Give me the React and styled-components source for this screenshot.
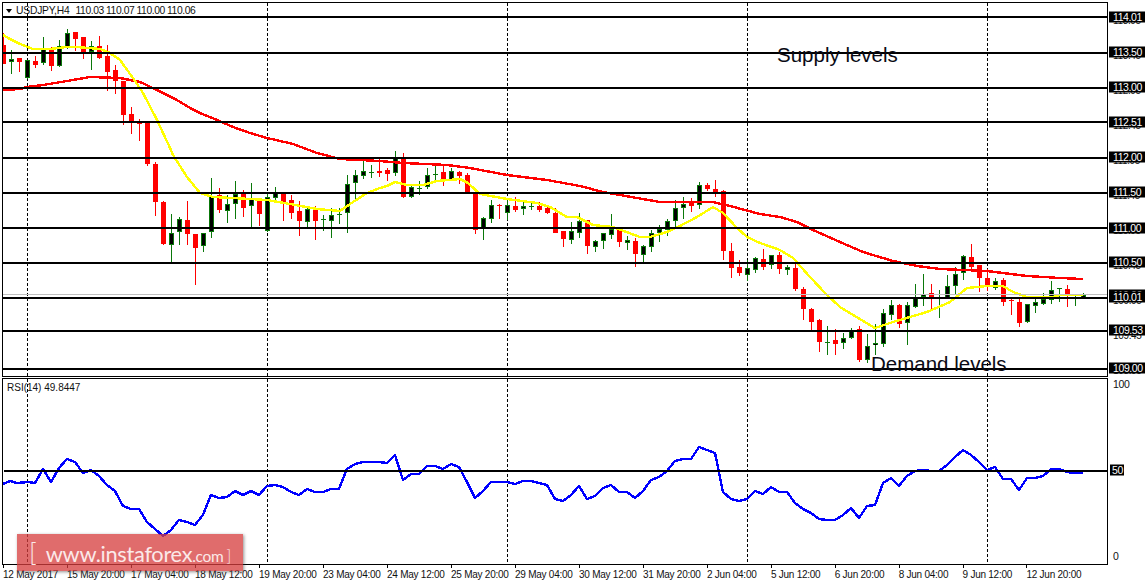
import React from "react";
import styled, { createGlobalStyle } from "styled-components";

const GlobalStyle = createGlobalStyle`
  html, body { margin: 0; padding: 0; background: #fff; }
  body { font-family: "Liberation Sans", Arial, sans-serif; }
`;

// [direction, wick top, body top, body bottom, wick bottom], one candle every 8px from x=3.
const CANDLES = [
  ["d",33,45,64,64],["u",50,59,62,74],["d",58,58,62,72],["u",60,60,78,79],["d",56,61,65,68],
  ["u",37,48,63,65],["d",47,49,66,71],["u",40,46,66,67],["u",29,33,47,49],["d",32,32,39,51],
  ["d",37,37,52,59],["u",41,46,52,70],["d",36,46,58,59],["d",45,56,72,91],["d",65,70,81,94],
  ["d",81,81,115,125],["d",107,114,122,134],["d",119,121,124,141],["d",122,122,164,166],["d",162,164,202,216],
  ["d",201,202,244,245],["u",214,233,245,264],["u",217,219,232,245],["d",201,220,234,245],["d",234,234,248,285],
  ["u",233,233,246,252],["u",178,196,232,238],["d",188,195,210,213],["u",195,204,211,223],["u",181,194,204,219],
  ["d",190,194,208,217],["u",183,199,206,228],["d",199,199,214,226],["u",193,197,231,232],["u",187,193,198,200],
  ["d",193,194,202,221],["d",195,200,213,219],["d",201,211,221,236],["u",208,209,222,227],["d",206,210,221,240],
  ["c",215,219,219,231],["u",208,215,221,238],["c",208,214,214,224],["u",175,184,213,233],["u",170,175,183,200],
  ["u",161,171,176,179],["c",165,172,172,178],["d",157,171,173,177],["d",168,170,174,181],["u",151,158,173,176],
  ["d",153,159,197,198],["u",185,187,197,198],["c",181,188,188,195],["u",168,175,187,189],["c",165,174,174,181],
  ["d",165,172,179,186],["u",168,171,180,180],["d",171,172,176,184],["d",173,175,193,193],["d",193,193,230,234],
  ["u",217,218,228,240],["u",200,205,219,223],["x",204,205,205,219],["u",199,205,213,220],["d",197,206,210,212],
  ["u",202,206,209,215],["c",202,206,206,210],["d",202,206,210,212],["d",206,208,213,214],["d",208,213,233,233],
  ["d",231,231,239,247],["u",222,231,240,244],["u",213,221,233,238],["d",220,220,246,254],["u",240,241,247,252],
  ["u",233,233,241,249],["u",214,229,235,239],["d",228,230,242,247],["u",236,240,243,250],["d",238,241,254,267],
  ["u",245,246,255,263],["u",230,233,247,252],["u",225,229,233,242],["u",219,221,230,236],["u",200,208,221,228],
  ["u",197,204,208,219],["d",198,202,206,212],["u",182,185,205,209],["d",183,185,189,191],["d",180,189,193,197],
  ["d",190,191,251,260],["d",243,251,268,278],["d",260,267,273,276],["u",260,268,275,281],["u",257,258,270,273],
  ["d",249,259,267,270],["u",255,255,265,269],["d",252,255,269,274],["u",265,267,270,275],["d",263,268,289,291],
  ["d",287,289,309,320],["d",308,309,322,332],["d",319,320,342,352],["c",326,342,342,355],["d",329,340,344,355],
  ["u",333,338,343,349],["u",328,330,338,339],["d",326,329,360,362],["u",334,346,360,363],["u",324,343,345,355],
  ["u",309,313,344,347],["u",300,305,315,320],["d",304,305,324,328],["u",302,305,323,345],["u",284,298,307,308],
  ["u",274,294,297,306],["d",284,293,299,311],["c",290,298,298,318],["u",275,286,299,299],["u",267,274,286,295],
  ["u",255,256,273,280],["d",244,257,267,269],["d",265,265,278,292],["d",269,278,287,291],["u",278,281,288,290],
  ["d",278,280,302,306],["x",297,300,300,315],["d",298,302,323,327],["u",304,304,322,323],["u",298,302,306,313],
  ["u",293,299,304,305],["u",281,290,300,304],["c",288,288,288,302],["d",285,289,296,307],["c",295,295,295,306],
  ["u",293,295,297,299],
];

const YELLOW = "3,35 10,39 20,44 33,49 50,49 67,47 77,47 100,49 110,53 120,60 133,78 143,93 157,120 170,148 173,155 187,177 200,193 213,197 233,198 267,200 290,204 317,209 340,211 353,202 367,193 380,188 387,186 395,182 407,185 423,185 437,181 460,179 468,183 480,194 507,199 537,203 550,207 567,217 577,217 593,225 613,227 640,237 650,237 667,232 680,226 697,217 713,207 723,213 737,228 747,237 760,243 780,250 793,258 810,277 827,295 840,307 853,315 875,328 893,322 910,317 927,312 950,302 967,288 987,286 1003,286 1013,292 1027,297 1053,297 1060,295 1083,295";
const RED = "3,90 20,89 27,87 43,85 67,81 90,77 120,78 140,82 157,90 177,100 190,108 200,113 217,120 233,127 250,133 267,138 293,144 317,153 340,159 380,161 403,163 447,165 470,168 507,175 547,180 580,186 603,192 637,198 660,202 713,202 730,206 760,214 780,217 797,222 813,230 840,242 863,252 893,261 917,266 940,269 987,271 1027,276 1060,278 1083,279";
const RSI = "3,484 10,481 17,483 28,482 35,483 43,469 51,482 59,468 67,459 75,462 83,473 91,470 99,476 107,485 115,491 123,506 131,509 139,509 147,522 155,529 163,536 171,530 179,520 187,522 195,525 203,515 211,495 219,498 227,497 235,491 243,495 251,491 259,495 267,486 275,485 283,487 291,492 299,495 307,489 315,492 323,492 331,489 339,489 347,469 355,464 363,462 371,462 379,462 387,463 395,455 403,480 411,474 419,474 427,466 435,466 443,469 451,464 459,467 467,482 475,498 483,491 491,482 499,482 507,482 515,484 523,481 531,481 539,483 547,485 555,499 563,501 571,495 579,486 587,499 595,496 603,488 611,485 619,492 627,492 635,498 643,491 651,480 659,477 667,471 675,461 683,459 691,459 699,447 707,450 715,453 723,492 731,499 739,501 747,499 755,491 763,494 771,487 779,492 787,492 795,503 803,509 811,513 819,519 827,520 835,520 843,515 851,508 859,518 867,506 875,505 883,483 891,478 899,486 907,476 915,471 923,470 931,471 939,471 947,465 955,457 963,450 971,455 979,462 987,470 995,467 1003,479 1011,479 1019,490 1027,478 1035,478 1043,476 1051,469 1059,469 1067,472 1075,473 1083,473";

const LEVELS = [17, 53, 88, 122, 158, 193, 228, 263, 298, 331, 369];
const SESSIONS = [27, 267, 507, 747, 987];
const TIME_TICKS = ["12 May 2017","15 May 20:00","17 May 04:00","18 May 12:00","19 May 20:00","23 May 04:00","24 May 12:00","25 May 20:00","29 May 04:00","30 May 12:00","31 May 20:00","2 Jun 04:00","5 Jun 12:00","6 Jun 20:00","8 Jun 04:00","9 Jun 12:00","12 Jun 20:00"];
const GRID_PRICES = [["113.95",21],["113.45",56],["112.95",91],["112.45",126],["111.95",161],["111.45",196],["110.95",231],["110.45",266],["109.95",301],["109.45",336],["108.95",371]];
const LEVEL_PRICES = [["114.01",17],["113.50",52],["113.00",87],["112.51",122],["112.00",157],["111.50",192],["111.00",228],["110.50",262],["110.06",295],["110.01",297],["109.53",330],["109.00",368]];

const Page = styled.div`
  width: 1147px;
  height: 585px;
  overflow: hidden;
  padding: 2px 0 0 2px;
  box-sizing: border-box;
  background: #fff;
  display: grid;
  grid-template-columns: 1106px 39px;
  grid-template-rows: 376px 187px 1fr;
  font-family: "Liberation Sans", Arial, sans-serif;
  position: relative;
`;

const Pane = styled.div`
  position: relative;
  box-sizing: border-box;
  border: 1px solid #000;
  ${(p) => p.$bottomGap && `margin-bottom: 1px;`}
`;

const PlotSvg = styled.svg`
  display: block;
  width: 100%;
  height: 100%;
`;

const PriceAxis = styled.div`
  position: relative;
`;

const GridPrice = styled.span`
  position: absolute;
  left: 5px;
  transform: translateY(-50%);
  font-size: 10px;
  line-height: 10px;
  letter-spacing: -0.35px;
  color: #111;
  white-space: nowrap;
`;

const LevelTag = styled.span`
  position: absolute;
  left: 1px;
  width: 36px;
  height: 11px;
  transform: translateY(-50%);
  padding-left: 4px;
  box-sizing: border-box;
  background: #000;
  color: #fff;
  font-size: 10.5px;
  line-height: 11px;
  letter-spacing: -0.4px;
  white-space: nowrap;
`;

const RsiValue = styled.span`
  position: absolute;
  left: 5px;
  transform: translateY(-50%);
  font-size: 10.5px;
  line-height: 11px;
  letter-spacing: -0.3px;
  color: #111;
`;

const RsiTag = styled(RsiValue)`
  left: 2px;
  padding: 0 1px 0 2px;
  background: #000;
  color: #fff;
`;

const Title = styled.div`
  position: absolute;
  left: 3px;
  top: 1px;
  display: flex;
  align-items: center;
  gap: 4px;
  font-size: 10.3px;
  line-height: 14px;
  color: #111;
  letter-spacing: -0.2px;
`;

const TitleArrow = styled.i`
  width: 0;
  height: 0;
  border-left: 3.5px solid transparent;
  border-right: 3.5px solid transparent;
  border-top: 4px solid #000;
`;

const TitleQuotes = styled.span`
  margin-left: 2px;
  letter-spacing: -0.4px;
  word-spacing: -0.3px;
`;

const Note = styled.div`
  position: absolute;
  left: ${(p) => p.$left}px;
  top: ${(p) => p.$top}px;
  font-size: 20.5px;
  line-height: 24px;
  color: #0a0a14;
  white-space: nowrap;
`;

const RsiTitle = styled.div`
  position: absolute;
  left: 4px;
  top: 2px;
  font-size: 10px;
  line-height: 14px;
  color: #111;
`;

const TimeAxis = styled.div`
  grid-column: 1 / -1;
  display: flex;
  padding-top: 3px;
  margin-left: 1px;
  position: relative;
`;

const TimeTick = styled.div`
  flex: 0 0 ${(p) => p.$w}px;
  height: 16px;
  font-size: 10px;
  line-height: 13px;
  letter-spacing: -0.25px;
  color: #111;
  white-space: nowrap;
  position: relative;
  &::before {
    content: "";
    position: absolute;
    left: 0;
    top: -3px;
    width: 1px;
    height: 3px;
    background: #000;
  }
`;

const Watermark = styled.div`
  position: absolute;
  left: 17px;
  top: 534px;
  width: 226px;
  height: 37px;
  display: flex;
  align-items: baseline;
  padding: 0 12px;
  box-sizing: border-box;
  background: rgba(214, 62, 62, 0.76);
  box-shadow: 1px 1px 3px rgba(60, 60, 60, 0.55);
  color: #fbe9e9;
  font-family: "Lato", "Liberation Sans", sans-serif;
  line-height: 36px;
  white-space: nowrap;
`;

const WmBracket = styled.span`
  font-size: 26px;
  font-weight: 300;
`;

const WmMain = styled.span`
  font-size: 21.8px;
  margin-left: 9px;
  letter-spacing: -0.3px;
`;

const WmSuffix = styled.span`
  font-size: 15.5px;
  letter-spacing: -0.3px;
`;

const WmClose = styled.span`
  font-size: 16px;
  margin-left: 3px;
  font-weight: 300;
`;

function Candle({ x, c }) {
  const [kind, wt, bt, bb, wb] = c;
  const up = kind === "u" || kind === "c";
  const colour = up ? "#0a780a" : "#ff0000";
  const cross = kind === "c" || kind === "x";
  return (
    <g>
      <rect x={x} y={wt} width={1} height={wb - wt} fill={colour} />
      {cross ? (
        <rect x={x - 2} y={bt} width={5} height={1} fill={colour} />
      ) : (
        <>
          <rect x={x - 2} y={bt} width={5} height={bb - bt} fill={colour} />
          {up && <rect x={x - 1} y={bt + 1} width={3} height={Math.max(1, bb - bt - 2)} fill="#000" />}
        </>
      )}
    </g>
  );
}

function SessionLines({ y1, y2 }) {
  return SESSIONS.map((x) => (
    <line key={x} x1={x + 0.5} x2={x + 0.5} y1={y1} y2={y2} stroke="#000" strokeWidth="1" strokeDasharray="3 2" />
  ));
}

function PricePlot() {
  return (
    <PlotSvg viewBox="3 3 1104 373" preserveAspectRatio="none">
      <SessionLines y1={3} y2={376} />
      <g shapeRendering="crispEdges">
        {CANDLES.map((c, i) => (
          <Candle key={i} x={3 + i * 8} c={c} />
        ))}
      </g>
      <polyline points={RED} fill="none" stroke="#ff0000" strokeWidth="2.4" strokeLinejoin="round" shapeRendering="crispEdges" />
      <polyline points={YELLOW} fill="none" stroke="#ffff00" strokeWidth="2.4" strokeLinejoin="round" shapeRendering="crispEdges" />
      <line x1="3" x2="1107" y1="294.5" y2="294.5" stroke="#c0c0c0" strokeWidth="1" />
      <g shapeRendering="crispEdges">
        {LEVELS.map((y) => (
          <rect key={y} x="3" y={y - 1} width="1104" height="2" fill="#000" />
        ))}
      </g>
    </PlotSvg>
  );
}

function RsiPlot() {
  return (
    <PlotSvg viewBox="3 379 1104 185" preserveAspectRatio="none">
      <SessionLines y1={379} y2={564} />
      <polyline points={RSI} fill="none" stroke="#0000ff" strokeWidth="2.4" strokeLinejoin="round" shapeRendering="crispEdges" />
      <rect x="4" y="470" width="1103" height="2" fill="#000" shapeRendering="crispEdges" />
    </PlotSvg>
  );
}

export default function App() {
  return (
    <>
      <GlobalStyle />
      <Page>
        <Pane $bottomGap>
          <PricePlot />
          <Title>
            <TitleArrow />
            <span>USDJPY,H4</span>
            <TitleQuotes>110.03 110.07 110.00 110.06</TitleQuotes>
          </Title>
          <Note $left={774} $top={40}>Supply levels</Note>
          <Note $left={868} $top={349}>Demand levels</Note>
        </Pane>
        <PriceAxis>
          {GRID_PRICES.map(([t, y]) => (
            <GridPrice key={t} style={{ top: y - 2 }}>{t}</GridPrice>
          ))}
          {LEVEL_PRICES.map(([t, y]) => (
            <LevelTag key={t} style={{ top: y - 2 }}>{t}</LevelTag>
          ))}
        </PriceAxis>
        <Pane>
          <RsiPlot />
          <RsiTitle>RSI(14) 49.8447</RsiTitle>
        </Pane>
        <PriceAxis>
          <RsiValue style={{ top: 6 }}>100</RsiValue>
          <RsiTag style={{ top: 92 }}>50</RsiTag>
          <RsiValue style={{ top: 178 }}>0</RsiValue>
        </PriceAxis>
        <TimeAxis>
          {TIME_TICKS.map((t, i) => (
            <TimeTick key={t} $w={i < 11 ? 64 : 63.9}>{t}</TimeTick>
          ))}
        </TimeAxis>
        <Watermark>
          <WmBracket>[</WmBracket>
          <WmMain>www.instaforex</WmMain>
          <WmSuffix>.com</WmSuffix>
          <WmClose>]</WmClose>
        </Watermark>
      </Page>
    </>
  );
}
